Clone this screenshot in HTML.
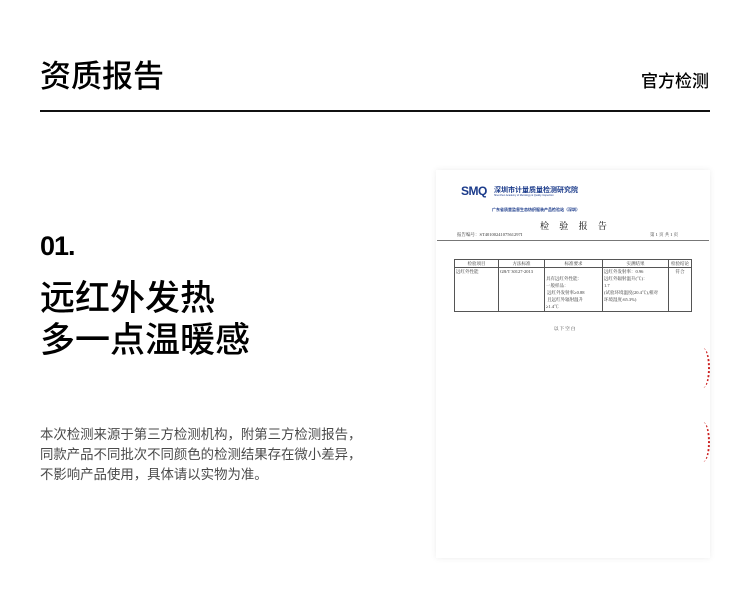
<!DOCTYPE html>
<html><head><meta charset="utf-8"><style>
*{margin:0;padding:0;box-sizing:border-box}
body{width:750px;height:594px;background:#fff;position:relative;overflow:hidden;font-family:"Liberation Sans","Noto Sans CJK SC",sans-serif;color:#000}
.a{position:absolute;white-space:nowrap}
.s{font-family:"Liberation Serif","Noto Serif CJK SC",serif;font-size:4.5px;color:#333}
td{border:0.6px solid #555;font-family:"Liberation Serif","Noto Serif CJK SC",serif;font-size:4.5px;color:#333;vertical-align:top;padding:0 1px;line-height:7px}
</style></head><body>
<div class="a" style="left:40px;top:57px;font-size:31px;line-height:40px;font-weight:500">资质报告</div>
<div class="a" style="left:641px;top:72px;font-size:17px;line-height:20px;font-weight:500">官方检测</div>
<div class="a" style="left:40px;top:110px;width:670px;height:2px;background:#111"></div>

<div class="a" style="left:40px;top:229px;font-size:27px;line-height:34px;font-weight:bold;letter-spacing:-1px">01.</div>
<div class="a" style="left:40px;top:278px;font-size:35px;line-height:42px;font-weight:500">远红外发热<br>多一点温暖感</div>
<div class="a" style="left:40px;top:425px;font-size:13.4px;line-height:20px;color:#4a4a4a">本次检测来源于第三方检测机构，附第三方检测报告，<br>同款产品不同批次不同颜色的检测结果存在微小差异，<br>不影响产品使用，具体请以实物为准。</div>

<div class="a" style="left:436px;top:170px;width:274px;height:388px;background:#fff;box-shadow:0 0 6px rgba(0,0,0,0.08)"></div>
<div class="a" style="left:461px;top:184px;font-size:12px;font-weight:bold;color:#1a3a8a;letter-spacing:-0.5px">SMQ</div>
<div class="a" style="left:494px;top:185px;font-size:7px;font-weight:bold;color:#1a3a8a">深圳市计量质量检测研究院</div>
<div class="a" style="left:494px;top:194px;font-size:2.5px;color:#1a3a8a">Shenzhen Academy of Metrology &amp; Quality Inspection</div>
<div class="a" style="left:492px;top:207px;font-size:4px;font-weight:bold;color:#1a3a8a">广东省质量监督生态纺织服装产品检验站（深圳）</div>
<div class="a" style="left:540px;top:219px;font-size:9px;letter-spacing:4px;font-family:'Noto Serif CJK SC',serif">检 验 报 告</div>
<div class="a s" style="left:457px;top:232px">报告编号：ST4010024107561297I</div>
<div class="a s" style="left:650px;top:232px">第 1 页 共 1 页</div>
<div class="a" style="left:437px;top:240px;width:272px;height:1px;background:#777"></div>
<table class="a" style="left:454px;top:259px;width:238px;border-collapse:collapse;height:53px">
<tr style="height:7px"><td style="width:44px;text-align:center">检验项目</td><td style="width:46px;text-align:center">方法标准</td><td style="width:58px;text-align:center">标准要求</td><td style="width:66px;text-align:center">实测结果</td><td style="text-align:center">检验结论</td></tr>
<tr><td>远红外性能</td><td>GB/T 30127-2013</td><td><br>具有远红外性能：<br>一般样品：<br>&nbsp;远红外发射率≥0.88<br>&nbsp;且远红外辐射温升<br>≥1.4℃</td><td>远红外发射率：0.96<br>远红外辐射温升(℃)：<br>1.7<br>(试验环境温度(20.4℃),相对<br>环境湿度:65.3%)</td><td style="text-align:center">符合</td></tr>
</table>
<div class="a s" style="left:554px;top:326px">以 下 空 白</div>
<div class="a" style="left:696px;top:348px;width:14px;height:40px;border-right:2px dotted #c22;border-radius:0 50% 50% 0/0 50% 50% 0"></div>
<div class="a" style="left:696px;top:422px;width:14px;height:40px;border-right:2px dotted #c22;border-radius:0 50% 50% 0/0 50% 50% 0"></div>
</body></html>
